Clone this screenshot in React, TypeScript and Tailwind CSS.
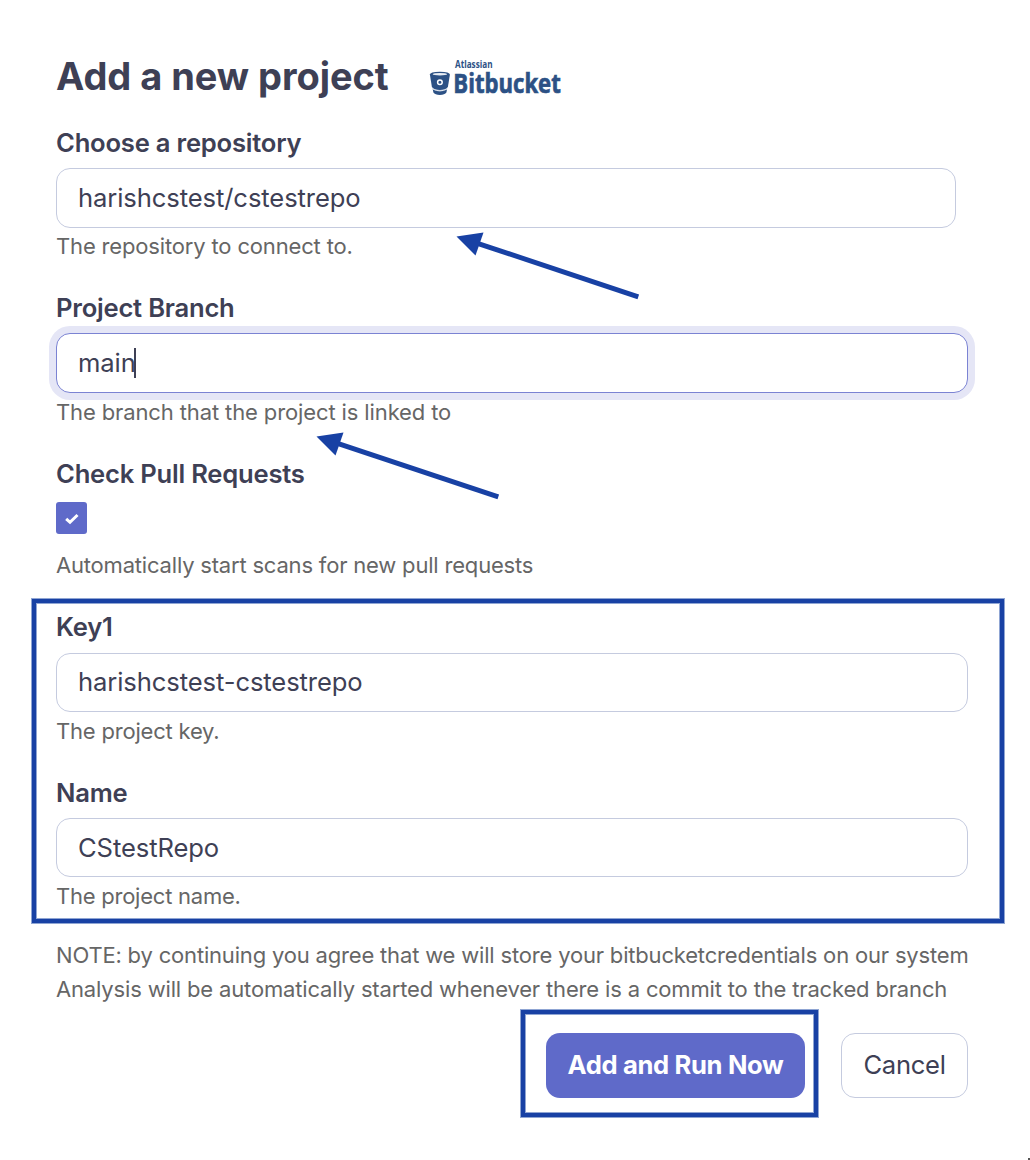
import React from "react";

type FieldProps = {
  label: string;
  value: string;
  help: string;
  labelClass: string;
  inputClass: string;
  helpClass: string;
  focused?: boolean;
};

function Label({ children, className = "" }: { children: React.ReactNode; className?: string }) {
  return (
    <div className={`h-8 whitespace-nowrap text-[25.6px] font-semibold leading-8 tracking-[-0.22px] text-[#3e4055] ${className}`}>{children}</div>
  );
}

function Help({ children, className = "tracking-[-0.18px]" }: { children: React.ReactNode; className?: string }) {
  return <div className={`h-[34px] whitespace-nowrap text-[22px] leading-[34px] text-[#666666] ${className}`}>{children}</div>;
}

function Field({ label, value, help, labelClass, inputClass, helpClass, focused }: FieldProps) {
  return (
    <div>
      <Label className={labelClass}>{label}</Label>
      <div
        className={`flex items-center rounded-[14px] border bg-white pl-[21px] text-[25.6px] tracking-[-0.1px] text-[#3e4055] ${
          focused ? "border-[#7b83d3] ring-[7px] ring-[#e5e6f6]" : "border-[#c5cbdf]"
        } ${inputClass}`}
      >
        <span>{value}</span>
        {focused && <span className="-ml-[2px] h-[30px] w-[2px] bg-[#3e4055]" />}
      </div>
      <Help className={helpClass}>{help}</Help>
    </div>
  );
}

function BitbucketLogo() {
  return (
    <svg width="136" height="54" viewBox="0 -7 136 54" className="ml-[40px] mt-[5px] shrink-0" aria-label="Atlassian Bitbucket">
      <path d="M0.9 14.6 Q0.9 11.7 10.9 11.7 Q20.9 11.7 20.9 14.6 L18.9 27 Q17 30 10.9 30 Q4.8 30 2.9 27 Z" fill="#2c5185" />
      <ellipse cx="10.9" cy="14.2" rx="7.2" ry="1.3" fill="#e8edf4" />
      <circle cx="10.9" cy="22.3" r="2.3" fill="none" stroke="#fff" strokeWidth="1.5" />
      <path d="M3.6 28.6 Q10.9 32.4 18.2 28.6 L17.4 32.6 Q15.8 34.9 10.9 34.9 Q6 34.9 4.4 32.6 Z" fill="#2c5185" />
      <path d="M3.7 29 Q10.9 32.8 18.1 29" fill="none" stroke="#fff" strokeWidth="0.9" />
      <text x="26" y="8" fontFamily="Open Sans" fontSize="10.2" fontWeight="700" fill="#2c5185" textLength="37.5" lengthAdjust="spacingAndGlyphs">Atlassian</text>
      <text x="24.3" y="33.3" fontFamily="Open Sans" fontSize="27.6" fontWeight="700" fill="#2c5185" stroke="#2c5185" strokeWidth="0.7" textLength="107.5" lengthAdjust="spacingAndGlyphs">Bitbucket</text>
    </svg>
  );
}

function Arrow({ className }: { className: string }) {
  return (
    <svg width="184" height="70" viewBox="0 0 184 70" className={`absolute ${className}`} aria-hidden="true">
      <path d="M20 10.8 L182.3 64.8" stroke="#1841a4" strokeWidth="5" />
      <path d="M0.5 4.5 L27.5 0.5 L19.5 23.5 Z" fill="#1841a4" />
    </svg>
  );
}

/* Highlight rectangle with a lighter hairline on both sides of its stroke. */
function Frame({ className }: { className: string }) {
  return (
    <div className={`pointer-events-none absolute border-4 border-[#1841a4] shadow-[0_0_0_1px_#8fa5d3,inset_0_0_0_1px_#8fa5d3] ${className}`} />
  );
}

export default function App() {
  return (
    <main className="relative h-[1160px] w-[1030px] overflow-hidden bg-white pl-14 pt-[53px] font-['Inter',sans-serif]">
      <header className="flex h-12 items-center">
        <h1 className="-mt-[2px] whitespace-nowrap text-[38px] font-bold leading-[48px] tracking-[-0.05px] text-[#3e4055]">Add a new project</h1>
        <BitbucketLogo />
      </header>
      <form className="w-[912px]">
        <Field label="Choose a repository" value="harishcstest/cstestrepo" help="The repository to connect to." labelClass="mt-[26px]" inputClass="mt-[9px] h-[60px] w-[900px]" helpClass="mt-[1px] tracking-[-0.16px]" />
        <Field label="Project Branch" value="main" help="The branch that the project is linked to" labelClass="mt-[29px]" inputClass="mt-[9px] h-[60px]" helpClass="mt-[2px] tracking-[-0.12px]" focused />
        <Label className="mt-[29px]">Check Pull Requests</Label>
        <div className="mt-3 flex h-8 w-[31px] items-center justify-center rounded-[3px] bg-[#5f6ac9]">
          <svg width="14" height="12" viewBox="0 0 14 12" className="mt-[2px]" aria-hidden="true">
            <path d="M1.2 5.8 L5 9.3 L12.5 2" fill="none" stroke="#fff" strokeWidth="3" />
          </svg>
        </div>
        <Help className="mt-[14px] tracking-[-0.19px]">Automatically start scans for new pull requests</Help>
        <Field label="Key1" value="harishcstest-cstestrepo" help="The project key." labelClass="mt-[29px]" inputClass="mt-[10px] h-[59px]" helpClass="mt-[2px] tracking-[-0.2px]" />
        <Field label="Name" value="CStestRepo" help="The project name." labelClass="mt-[29px]" inputClass="mt-[9px] h-[59px] pt-px" helpClass="mt-[2px] tracking-[-0.24px]" />
        <Help className="mt-[25px] tracking-[-0.18px]">NOTE: by continuing you agree that we will store your bitbucketcredentials on our system</Help>
        <Help className="tracking-[-0.16px]">Analysis will be automatically started whenever there is a commit to the tracked branch</Help>
        <div className="mt-[27px] flex justify-end gap-9">
          <button type="button" className="h-[65px] w-[259px] whitespace-nowrap rounded-[14px] bg-[#5f6ac9] text-[25.6px] font-bold tracking-[-0.35px] text-white">Add and Run Now</button>
          <button type="button" className="h-[65px] w-[127px] rounded-[14px] border border-[#c5cbdf] text-[25.6px] tracking-[-0.3px] text-[#3e4055]">Cancel</button>
        </div>
      </form>
      <Arrow className="left-[456px] top-[232px]" />
      <Arrow className="left-[316px] top-[432px]" />
      <Frame className="left-8 top-[599px] h-[324px] w-[972px]" />
      <Frame className="left-[521px] top-[1010px] h-[107px] w-[297px]" />
      <div className="absolute bottom-0 right-0 h-[2px] w-[2px] bg-[#555555]" />
    </main>
  );
}
